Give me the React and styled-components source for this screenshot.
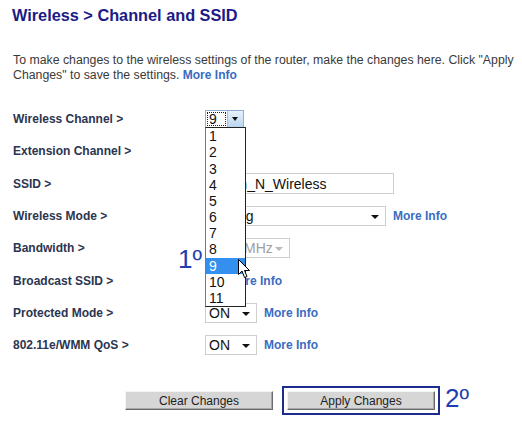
import React from "react";
import styled, { createGlobalStyle } from "styled-components";

const GlobalStyle = createGlobalStyle`
  body {
    margin: 0;
    background: #fff;
    font-family: Arial, "Liberation Sans", sans-serif;
  }
`;

const Page = styled.div`
  width: 522px;
  height: 422px;
  padding: 6px 0 0 12px;
  box-sizing: border-box;
  overflow: hidden;
`;

const Title = styled.h1`
  margin: 0;
  font-size: 16.3px;
  font-weight: bold;
  color: #1b1b86;
  line-height: 18px;
`;

const Intro = styled.p`
  margin: 29px 0 0 1px;
  font-size: 12.3px;
  line-height: 15px;
  color: #3a3a3a;
`;

const MoreInfo = styled.a`
  color: #3a6cc2;
  font-weight: bold;
  font-size: 12px;
  text-decoration: none;
  white-space: nowrap;
`;

const Form = styled.div`
  margin: 20px 0 0 1px;
  display: grid;
  grid-template-columns: 192px 1fr;
  grid-auto-rows: 32.3px;
  align-items: center;
`;

const Label = styled.div`
  font-size: 12px;
  font-weight: bold;
  color: #2b3550;
`;

const Field = styled.div`
  position: relative;
  display: flex;
  align-items: center;
  gap: 7px;
`;

const SelectBox = styled.div`
  position: relative;
  width: ${(p) => p.$w}px;
  height: 20px;
  box-sizing: border-box;
  border: 1px solid #cfcfcf;
  background: #fff;
  font-size: 14px;
  line-height: 18px;
  padding-left: 3px;
  text-indent: ${(p) => p.$indent ?? 0}px;
  overflow: hidden;
  color: ${(p) => (p.$disabled ? "#a0a0a0" : "#111")};
  &::after {
    content: "";
    position: absolute;
    right: 6px;
    top: 8px;
    border-left: 4px solid transparent;
    border-right: 4px solid transparent;
    border-top: 4px solid ${(p) => (p.$disabled ? "#b8b8b8" : "#111")};
  }
`;

const ChannelBox = styled.div`
  display: flex;
  width: 39px;
  height: 18px;
  box-sizing: border-box;
  border: 1px solid #8fb0d2;
  background: #fff;
  font-size: 14px;
`;

const FocusValue = styled.div`
  flex: 1;
  margin: 1px;
  border: 1px dotted #222;
  line-height: 12px;
  padding-left: 1px;
  color: #111;
`;

const ArrowButton = styled.div`
  width: 15px;
  border-left: 1px solid #9fbedc;
  background: linear-gradient(#e6f1fb, #b9d6f1);
  position: relative;
  &::after {
    content: "";
    position: absolute;
    left: 4px;
    top: 6px;
    border-left: 3.5px solid transparent;
    border-right: 3.5px solid transparent;
    border-top: 4px solid #111;
  }
`;

const List = styled.ul`
  position: absolute;
  left: 0;
  top: 17px;
  z-index: 2;
  margin: 0;
  padding: 0;
  list-style: none;
  width: 41px;
  box-sizing: border-box;
  border: 1px solid #222;
  border-left-color: #777;
  background: #fff;
`;

const Option = styled.li`
  height: 16.2px;
  line-height: 16px;
  font-size: 14px;
  padding-left: 3px;
  color: ${(p) => (p.$active ? "#fff" : "#111")};
  background: ${(p) => (p.$active ? "#3390ee" : "transparent")};
`;

const TextInput = styled.input`
  width: 189px;
  height: 21px;
  box-sizing: border-box;
  border: 1px solid #cfcfcf;
  padding: 0 3px;
  font-family: Arial, "Liberation Sans", sans-serif;
  font-size: 14px;
  color: #111;
  outline: none;
`;

const CheckBox = styled.span`
  width: 13px;
  height: 13px;
  margin-left: 3px;
  border: 1px solid #1c5180;
  box-sizing: border-box;
`;

const Step = styled.span`
  position: absolute;
  font-size: 26px;
  color: #1f3fb0;
  line-height: 26px;
  font-family: Arial, "Liberation Sans", sans-serif;
`;

const Pointer = styled.svg`
  position: absolute;
  left: 33px;
  top: 149px;
  z-index: 3;
`;

const Actions = styled.div`
  margin: 25px 0 0 113px;
  display: flex;
  align-items: center;
`;

const Button = styled.button`
  width: 148px;
  height: 19px;
  padding: 0;
  font-family: Arial, "Liberation Sans", sans-serif;
  font-size: 12px;
  color: #222;
  background: #d6d6d6;
  border: 1px solid;
  border-color: #f4f4f4 #6a6a6a #6a6a6a #f4f4f4;
  box-shadow: inset -1px -1px 0 #a8a8a8;
`;

const Highlight = styled.div`
  position: relative;
  margin-left: 9px;
  padding: 3px;
  border: 2px solid #1c2c8c;
  display: flex;
`;

const channels = Array.from({ length: 11 }, (_, i) => i + 1);

const App = () => (
  <Page>
    <GlobalStyle />
    <Title>Wireless &gt; Channel and SSID</Title>
    <Intro>
      To make changes to the wireless settings of the router, make the changes
      here. Click "Apply
      <br />
      Changes" to save the settings. <MoreInfo href="#">More Info</MoreInfo>
    </Intro>
    <Form>
      <Label>Wireless Channel &gt;</Label>
      <Field>
        <ChannelBox>
          <FocusValue>9</FocusValue>
          <ArrowButton />
        </ChannelBox>
        <List>
          {channels.map((c) => (
            <Option key={c} $active={c === 9}>
              {c}
            </Option>
          ))}
        </List>
        <Step style={{ left: -27, top: 136 }}>1º</Step>
        <Pointer width="13" height="20" viewBox="0 0 13 20">
          <path
            d="M0.5 0.5 L0.5 15.5 L4 12 L6.5 18.5 L9 17.5 L6.5 11.5 L11.5 11.5 Z"
            fill="#fff"
            stroke="#000"
            strokeWidth="1"
          />
        </Pointer>
      </Field>

      <Label>Extension Channel &gt;</Label>
      <Field />

      <Label>SSID &gt;</Label>
      <Field>
        <TextInput readOnly value="Belkin_N_Wireless" />
      </Field>

      <Label>Wireless Mode &gt;</Label>
      <Field>
        <SelectBox $w={181} $indent={-5}>
          802.11g
        </SelectBox>
        <MoreInfo href="#">More Info</MoreInfo>
      </Field>

      <Label>Bandwidth &gt;</Label>
      <Field>
        <SelectBox $w={85} $disabled>
          20/40MHz
        </SelectBox>
      </Field>

      <Label>Broadcast SSID &gt;</Label>
      <Field>
        <CheckBox />
        <MoreInfo href="#">More Info</MoreInfo>
      </Field>

      <Label>Protected Mode &gt;</Label>
      <Field>
        <SelectBox $w={52}>ON</SelectBox>
        <MoreInfo href="#">More Info</MoreInfo>
      </Field>

      <Label>802.11e/WMM QoS &gt;</Label>
      <Field>
        <SelectBox $w={52}>ON</SelectBox>
        <MoreInfo href="#">More Info</MoreInfo>
      </Field>
    </Form>
    <Actions>
      <Button>Clear Changes</Button>
      <Highlight>
        <Button>Apply Changes</Button>
        <Step style={{ left: 161, top: -3 }}>2º</Step>
      </Highlight>
    </Actions>
  </Page>
);

export default App;
